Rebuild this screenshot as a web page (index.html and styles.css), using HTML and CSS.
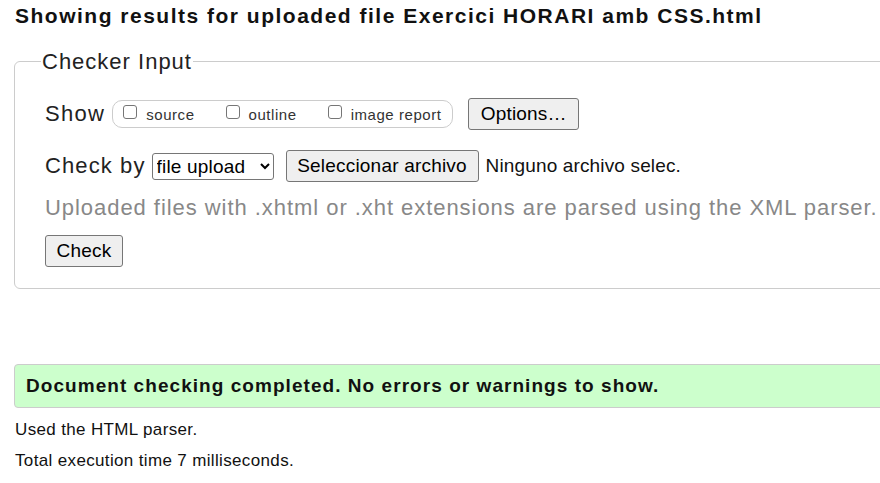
FILE: index.html
```html
<!DOCTYPE html>
<html lang="en">
<head>
<meta charset="utf-8">
<title>Showing results for uploaded file</title>
<link rel="stylesheet" href="styles.css">
</head>
<body>
<h2 class="title">Showing results for uploaded file Exercici HORARI amb CSS.html</h2>
<form class="checker">
  <fieldset class="input-set">
    <legend class="input-legend">Checker Input</legend>
    <div class="row row-show">
      <span class="row-label">Show</span>
      <span class="show-group">
        <label class="opt"><input type="checkbox" class="cb">source</label>
        <label class="opt"><input type="checkbox" class="cb">outline</label>
        <label class="opt"><input type="checkbox" class="cb">image report</label>
      </span>
      <button type="button" class="btn btn-options">Options…</button>
    </div>
    <div class="row row-check">
      <span class="row-label">Check by</span>
      <select class="sel"><option>file upload</option></select>
      <button type="button" class="btn btn-file">Seleccionar archivo</button>
      <span class="file-name">Ninguno archivo selec.</span>
    </div>
    <p class="hint">Uploaded files with .xhtml or .xht extensions are parsed using the XML parser.</p>
    <button type="button" class="btn btn-check">Check</button>
  </fieldset>
</form>
<div class="result">
  <p class="success">Document checking completed. No errors or warnings to show.</p>
</div>
<p class="meta">Used the HTML parser.</p>
<p class="meta">Total execution time 7 milliseconds.</p>
</body>
</html>
```

FILE: styles.css
```css
html {
  overflow: hidden;
}
body {
  margin: 0;
  padding: 4px 0 0 15px;
  font-family: "Liberation Sans", Arial, sans-serif;
  color: #111;
  width: 1100px;
  white-space: nowrap;
}
.title {
  margin: 0;
  font-size: 21px;
  line-height: 23px;
  letter-spacing: 1.5px;
  font-weight: bold;
}
.checker {
  margin: 22px 0 0 -1px;
}
.input-set {
  margin: 0;
  width: 1000px;
  padding: 0 30px 21px 30px;
  border: 1px solid #ccc;
  border-radius: 6px;
}
.input-legend {
  font-size: 22px;
  line-height: 25px;
  letter-spacing: 1px;
  padding: 0 1px;
  margin-left: -4px;
  color: #222;
}
.row {
  display: flex;
  align-items: center;
}
.row > * {
  flex-shrink: 0;
}
.row-show {
  margin-top: 24px;
  height: 32px;
}
.row-label {
  font-size: 22px;
  letter-spacing: 1.3px;
  color: #222;
  margin-right: 7px;
}
.show-group {
  display: inline-flex;
  align-items: center;
  height: 28px;
  width: 341px;
  box-sizing: border-box;
  border: 1px solid #ccc;
  border-radius: 10px;
  padding: 0 0 0 10px;
  margin-right: 15px;
}
.opt {
  flex-shrink: 0;
  font-size: 15px;
  letter-spacing: 0.55px;
  color: #333;
  display: inline-flex;
  align-items: center;
  margin-right: 31px;
}
.opt:last-child {
  margin-right: 0;
}
.cb {
  appearance: none;
  -webkit-appearance: none;
  box-sizing: border-box;
  width: 14px;
  height: 14px;
  border: 1px solid #767676;
  border-radius: 3px;
  background: #fff;
  margin: 0 9px 5px 0;
}
.btn {
  font-family: "Liberation Sans", Arial, sans-serif;
  font-size: 19px;
  letter-spacing: 0.2px;
  color: #000;
  background: #efefef;
  border: 1px solid #767676;
  border-radius: 3px;
  padding: 0;
  height: 32px;
  white-space: nowrap;
  text-align: center;
}
.btn-options {
  width: 111px;
}
.row-check {
  margin-top: 20px;
  height: 32px;
}
.row-check .row-label {
  letter-spacing: 1.1px;
  margin-right: 6px;
}
.sel {
  font-family: "Liberation Sans", Arial, sans-serif;
  font-size: 19px;
  letter-spacing: 0.2px;
  height: 27px;
  width: 122px;
  border: 1px solid #767676;
  border-radius: 3px;
  color: #000;
  background: #fff;
  margin-right: 12px;
}
.btn-file {
  width: 193px;
  margin-right: 7px;
}
.file-name {
  font-size: 19px;
  letter-spacing: 0.15px;
  color: #111;
}
.hint {
  margin: 13px 0 0;
  font-size: 22px;
  line-height: 25px;
  letter-spacing: 0.95px;
  color: #888;
}
.btn-check {
  margin-top: 15px;
  width: 78px;
}
.result {
  margin: 75px 0 0 -1px;
  width: 1000px;
  background: #ccffcc;
  border: 1px solid #ccc;
  border-radius: 4px;
  padding: 0 11px;
}
.success {
  margin: 0;
  font-size: 19px;
  font-weight: bold;
  letter-spacing: 1.05px;
  line-height: 42px;
  color: #111;
}
.meta {
  margin: 13px 0 0;
  font-size: 17px;
  letter-spacing: 0.35px;
  line-height: 18px;
  color: #111;
}
.meta + .meta {
  margin-top: 13px;
}
```
